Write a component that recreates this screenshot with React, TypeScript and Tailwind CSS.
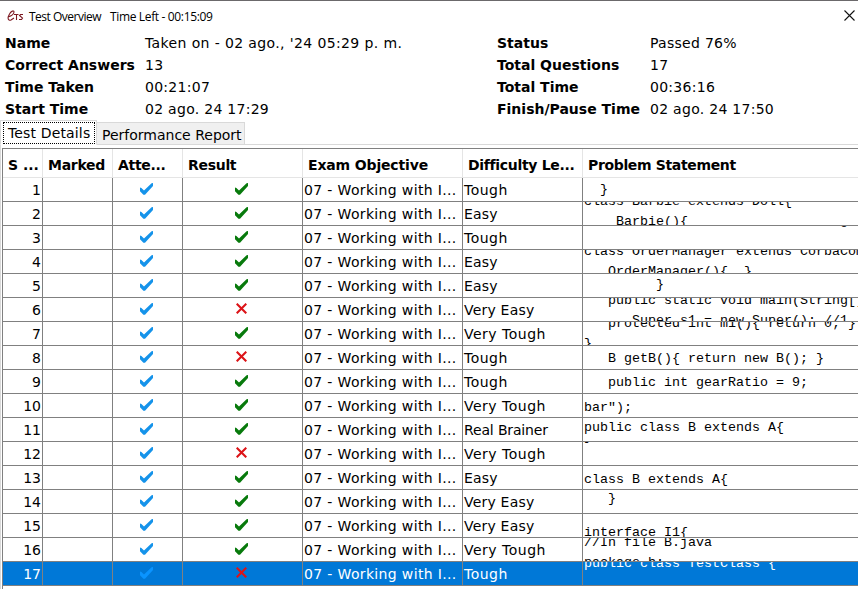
const F = "font-['DejaVu_Sans','Verdana',sans-serif]";

type Row = { level: string; ok: boolean; code: string; shift: string };

const rows: Row[] = [
  { level: "Tough", ok: true, code: "  }", shift: "mt-[2px]" },
  { level: "Easy", ok: true, code: "class Barbie extends Doll{\n    Barbie(){", shift: "mt-[-10px]" },
  { level: "Tough", ok: true, code: "                                g", shift: "mt-[-15px]" },
  { level: "Easy", ok: true, code: "class OrderManager extends CorbaComponent{\n   OrderManager(){  }", shift: "mt-[-8px]" },
  { level: "Easy", ok: true, code: "         }", shift: "mt-[1px]" },
  { level: "Very Easy", ok: false, code: "   public static void main(String[] args){\n      Super s1 = new Super(); //1", shift: "mt-[-7px]" },
  { level: "Very Tough", ok: true, code: "   protected int m1(){ return 0; }\n}", shift: "mt-[-8px]" },
  { level: "Tough", ok: false, code: "   B getB(){ return new B(); }", shift: "mt-[3px]" },
  { level: "Tough", ok: true, code: "   public int gearRatio = 9;", shift: "mt-[3px]" },
  { level: "Very Tough", ok: true, code: 'bar");', shift: "mt-[4px]" },
  { level: "Real Brainer", ok: true, code: "public class B extends A{", shift: "mt-[0px]" },
  { level: "Very Tough", ok: false, code: "}", shift: "mt-[-15px]" },
  { level: "Easy", ok: true, code: "class B extends A{", shift: "mt-[4px]" },
  { level: "Very Easy", ok: true, code: "   }", shift: "mt-[-1px]" },
  { level: "Very Easy", ok: true, code: "interface I1{", shift: "mt-[9px]" },
  { level: "Very Tough", ok: true, code: "//In file B.java\npackage b;", shift: "mt-[-5px]" },
  { level: "Tough", ok: false, code: "public class TestClass {", shift: "mt-[-8px]" },
];

const levelTracking: Record<string, string> = {
  Tough: "tracking-[0.5px]",
  Easy: "tracking-[0.2px]",
  "Very Easy": "tracking-[0.2px]",
  "Very Tough": "tracking-[0.5px]",
  "Real Brainer": "tracking-[-0.15px]",
};

const headers: [string, string][] = [
  ["S ...", "tracking-normal"],
  ["Marked", "tracking-[-0.3px]"],
  ["Atte...", "tracking-[-0.3px]"],
  ["Result", "tracking-[-0.3px]"],
  ["Exam Objective", "tracking-[-0.15px]"],
  ["Difficulty Le...", "tracking-[-0.32px]"],
  ["Problem Statement", "tracking-[-0.35px]"],
];

function Check({ color }: { color: string }) {
  return (
    <svg width="13" height="12" viewBox="0 0 13 12" fill={color}>
      <path d="M0 4.6 L1.4 4.9 L4 7.6 L11.6 0.3 L13 0 L13 3 L5 11.8 L3.4 11.8 L0 8.2 Z" />
    </svg>
  );
}

function Cross() {
  return (
    <svg width="11" height="11" viewBox="0 0 11 11" stroke="#dc1418" strokeWidth="2.1">
      <path d="M.7 .7 L10.3 10.3 M10.3 .7 L.7 10.3" />
    </svg>
  );
}

function Info({ items, cols }: { items: [string, string][]; cols: string }) {
  return (
    <dl className={`grid auto-rows-[22px] content-start leading-[22px] ${cols}`}>
      {items.map(([k, v]) => (
        <div key={k} className="contents">
          <dt className="font-bold">{k}</dt>
          <dd className={v.length > 20 ? "tracking-[0.38px]" : "tracking-[0.28px]"}>{v}</dd>
        </div>
      ))}
    </dl>
  );
}

const grid = "grid grid-cols-[40px_70px_70px_120px_160px_120px_276px]";

export default function App() {
  return (
    <main className={`h-[589px] w-[858px] overflow-hidden whitespace-nowrap border-t border-[#6b696b] bg-white text-[14px] text-black ${F}`}>
      <header className="flex h-[31px] items-center pl-[7px] pr-[3px] font-['Open_Sans',sans-serif] text-[12px]">
        <svg className="mb-[2px]" width="17" height="12" viewBox="0 0 17 12" fill="none" stroke="#7c1820" strokeWidth="1.1">
          <path d="M1 7 C4 6 7 4 7 2 C7 0 4 1 2.5 4 C0 8 1 11 4 10 L7 8 M7 4.5 H11.5 M9.5 4.5 V10 M16 4.5 H13.5 L12.5 5.5 L15.5 8 L14.5 9.5 H12" />
        </svg>
        <span className="ml-[5px] w-[81px] tracking-[-0.5px]">Test Overview</span>
        <span className="tracking-[-0.35px]">Time Left - 00:15:09</span>
        <svg className="mb-[2px] ml-auto" width="11" height="11" viewBox="0 0 11 11" stroke="#111" strokeWidth="1.1">
          <path d="M.5 .5 L10.5 10.5 M10.5 .5 L.5 10.5" />
        </svg>
      </header>

      <section className="flex h-[89px] pl-[5px]">
        <Info
          cols="w-[492px] grid-cols-[140px_1fr]"
          items={[
            ["Name", "Taken on - 02 ago., '24 05:29 p. m."],
            ["Correct Answers", "13"],
            ["Time Taken", "00:21:07"],
            ["Start Time", "02 ago. 24 17:29"],
          ]}
        />
        <Info
          cols="grid-cols-[153px_1fr]"
          items={[
            ["Status", "Passed 76%"],
            ["Total Questions", "17"],
            ["Total Time", "00:36:16"],
            ["Finish/Pause Time", "02 ago. 24 17:50"],
          ]}
        />
      </section>

      <nav className="flex h-[24px] items-end border-b border-[#d9d9d9]">
        <div className="mb-[-1px] h-[25px] border border-[#d9d9d9] border-b-white bg-white pl-[2px] pr-[1px] pt-[1px]">
          <div className="h-[22px] w-[92px] border border-dotted border-black pl-[4px] leading-[20px] tracking-[0.15px]">Test Details</div>
        </div>
        <div className="h-[22px] w-[148px] border border-b-0 border-l-0 border-[#d9d9d9] bg-[#f0f0f0] pl-[5px] leading-[24px]">Performance Report</div>
      </nav>

      <div className="flex h-[444px] border-l border-[#d9d9d9] pl-px pt-[3px]">
        <div className="border-l border-t border-[#808080]">
          <div className={`${grid} h-[29px] border-b border-[#e5e5e5] font-bold leading-[33px]`}>
            {headers.map(([h, tracking]) => (
              <div key={h} className={`overflow-hidden border-r border-[#e5e5e5] pl-[5px] ${tracking}`}>{h}</div>
            ))}
          </div>
          {rows.map((r, i) => {
            const sel = i === 16;
            const cell = "h-[24px] overflow-hidden border-b border-r border-[#808080]";
            return (
              <div key={i} className={`${grid} leading-[24px] ${sel ? "bg-[#0078d7] text-white" : ""}`}>
                <div className={`${cell} pr-px text-right`}>{i + 1}</div>
                <div className={cell} />
                <div className={`${cell} flex justify-center pr-[2px] pt-[5px]`}>
                  <Check color={sel ? "#0a94ff" : "#1593ea"} />
                </div>
                <div className={`${cell} flex justify-center pr-[2px] pt-[5px]`}>
                  {r.ok ? <Check color="#087a0c" /> : <Cross />}
                </div>
                <div className={`${cell} pl-px tracking-[0.35px]`}>07 - Working with I...</div>
                <div className={`${cell} pl-px ${levelTracking[r.level]}`}>{r.level}</div>
                <div className={`${cell} pl-px`}>
                  <pre className={`font-['Liberation_Mono','Courier_New',monospace] text-[13.33px] leading-[20px] ${r.shift}`}>{r.code}</pre>
                </div>
              </div>
            );
          })}
        </div>
      </div>
    </main>
  );
}
